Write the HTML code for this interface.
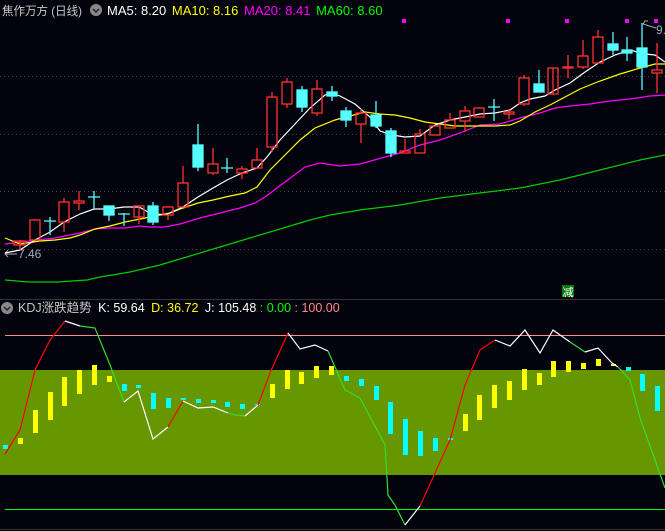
<!DOCTYPE html>
<html><head><meta charset="utf-8"><style>
body{margin:0;background:#03030d;width:665px;height:531px;overflow:hidden;font-family:"Liberation Sans","Noto Sans CJK SC",sans-serif}
</style></head><body>
<svg width="665" height="531" viewBox="0 0 665 531" xmlns="http://www.w3.org/2000/svg" style="display:block">
<rect width="665" height="531" fill="#03030d"/>
<g stroke="#444" stroke-dasharray="1,3" stroke-width="1">
<line x1="0" y1="76.5" x2="665" y2="76.5"/><line x1="0" y1="134.5" x2="665" y2="134.5"/>
<line x1="0" y1="191.5" x2="665" y2="191.5"/><line x1="0" y1="249.5" x2="665" y2="249.5"/>
</g>
<line x1="0" y1="299.5" x2="665" y2="299.5" stroke="#333"/>
<line x1="0" y1="529.5" x2="665" y2="529.5" stroke="#333"/>
<!-- header -->
<text x="2" y="15" font-size="12" fill="#c8c8c8" textLength="80" lengthAdjust="spacingAndGlyphs">焦作万方 (日线)</text>
<circle cx="96" cy="10" r="6" fill="#888"/><path d="M93 9l3 3 3-3" stroke="#222" fill="none" stroke-width="1.5"/>
<text x="107" y="15" font-size="13"><tspan fill="#fff">MA5: 8.20 </tspan><tspan fill="#ff0" dx="2">MA10: 8.16 </tspan><tspan fill="#f0f" dx="2">MA20: 8.41 </tspan><tspan fill="#0f0" dx="2">MA60: 8.60</tspan></text>
<g fill="#f0f"><rect x="402" y="19" width="4" height="4"/><rect x="506" y="19" width="4" height="4"/><rect x="565" y="19" width="4" height="4"/><rect x="625" y="19" width="4" height="4"/><rect x="654" y="19" width="4" height="4"/></g>
<path d="M643 24l2-3h3M643 24l13 4" stroke="#aaa" fill="none"/><text x="656" y="34" font-size="12" fill="#9ab">9.</text>
<path d="M8 250l-3 4 3 3M5 254h12" stroke="#aaa" fill="none"/><text x="18" y="258" font-size="12" fill="#9ab">7.46</text>
<!-- MA lines -->
<polyline fill="none" stroke="#0c0" stroke-width="1.2" points="5,280 28,282 57,282 87,280 100,277 130,272 160,265 190,256 220,247 250,238 280,229 310,220 330,215 360,210 400,205 440,198 480,193 520,188 560,180 600,170 640,160 665,155"/>
<polyline fill="none" stroke="#f0f" stroke-width="1.2" points="5,244 30,241 55,238 80,233 95,229 110,228 125,228 140,226 150,227 165,227 180,224 200,218 220,213 240,208 255,203 265,197 285,182 305,167 320,163 340,166 360,164 385,157 400,153 420,145 440,140 460,133 480,125 500,124 520,118 540,113 555,108 570,106 590,104 610,101 630,99 650,96 665,95"/>
<polyline fill="none" stroke="#ff0" stroke-width="1.2" points="5,238 20,244 40,241 55,240 70,238 80,235 95,229 110,226 125,222 140,219 155,216 170,213 183,208 198,203 213,200 230,196 245,193 257,187 270,170 285,155 300,140 315,128 335,120 350,116 365,112 380,114 395,115 410,118 425,122 440,124 455,126 480,126 495,126 510,125 520,121 535,112 550,105 565,97 580,89 600,81 620,74 640,68 655,64 665,64"/>
<polyline fill="none" stroke="#fff" stroke-width="1.2" points="5,253 20,250 35,240 50,232 64,222 80,214 94,209 109,209 124,207 139,207 150,213 165,215 183,207 198,197 213,188 227,180 242,173 257,168 267,157 280,140 295,124 310,108 325,95 332,93 340,96 355,104 370,117 380,131 392,135 405,137 420,136 435,125 450,120 465,117 480,114 495,113 510,110 520,103 530,99 545,96 555,90 570,83 585,72 600,62 615,55 630,50 645,54 655,55 665,62"/>
<!-- candles -->
<g stroke="#ff3030" fill="none" stroke-width="1.3">
<path d="M20,240V250M35,219V220M64,198V202M64,222V232M79,191V201M79,203V210M139,206V224M168,206V207M168,215V220M183,166V183M213,148V164M213,173V175M242,166V169M242,173V179M257,148V160M272,92V97M272,147V152M287,78V82M287,104V108M317,80V89M317,113V116M361,109V113M361,124V143M405,139V151M420,129V134M450,113V120M465,106V111M465,121V132M479,107V108M509,109V119M524,75V78M524,104V106M553,68V94M568,55V78M583,40V56M583,67V69M598,30V37M657,43V70M657,73V93"/>
<rect x="14" y="241" width="11" height="4"/><rect x="30" y="220" width="10" height="20"/><rect x="59" y="202" width="10" height="20"/><rect x="74" y="201" width="10" height="2"/><rect x="134" y="206" width="10" height="11"/><rect x="163" y="207" width="10" height="8"/><rect x="178" y="183" width="10" height="24"/><rect x="208" y="164" width="10" height="9"/><rect x="237" y="169" width="10" height="4"/><rect x="252" y="160" width="10" height="8"/><rect x="267" y="97" width="10" height="50"/><rect x="282" y="82" width="10" height="22"/><rect x="312" y="89" width="10" height="24"/><rect x="356" y="113" width="10" height="11"/><rect x="400" y="151" width="10" height="2"/><rect x="415" y="134" width="10" height="19"/><rect x="430" y="126" width="10" height="9"/><rect x="445" y="120" width="10" height="8"/><rect x="460" y="111" width="10" height="10"/><rect x="474" y="108" width="10" height="9"/><rect x="504" y="112" width="10" height="2"/><rect x="519" y="78" width="10" height="26"/><rect x="548" y="68" width="10" height="26"/><rect x="563" y="67" width="10" height="1"/><rect x="578" y="56" width="10" height="11"/><rect x="593" y="37" width="10" height="26"/><rect x="652" y="70" width="10" height="3"/>
</g>
<g stroke="#55ffff" fill="#55ffff" stroke-width="1.3">
<path d="M50,217V235M44,221H56M94,191V209M88,197H100M109,215V221M124,213V226M118,214H130M153,202V225M198,124V171M227,158V173M221,168H233M302,86V112M332,86V101M346,107V127M376,101V128M391,128V157M494,99V121M488,107H500M539,70V92M613,32V55M627,37V61M642,23V90" fill="none"/>
<rect x="104" y="206" width="10" height="9"/><rect x="148" y="206" width="10" height="16"/><rect x="193" y="145" width="10" height="22"/><rect x="297" y="90" width="10" height="17"/><rect x="327" y="92" width="10" height="4"/><rect x="341" y="111" width="10" height="9"/><rect x="371" y="115" width="10" height="11"/><rect x="386" y="131" width="10" height="22"/><rect x="534" y="84" width="10" height="8"/><rect x="608" y="44" width="10" height="6"/><rect x="622" y="50" width="10" height="3"/><rect x="637" y="48" width="10" height="19"/>
</g>
<rect x="562" y="285" width="12" height="12" fill="#0a7a0a"/><text x="562.5" y="296" font-size="11" fill="#fff">减</text>
<!-- KDJ header -->
<circle cx="7" cy="308" r="6" fill="#888"/><path d="M4 307l3 3 3-3" stroke="#222" fill="none" stroke-width="1.5"/>
<text x="18" y="312" font-size="12.5"><tspan fill="#c8c8c8">KDJ涨跌趋势 </tspan><tspan fill="#fff" dx="3">K: 59.64 </tspan><tspan fill="#ff0" dx="3">D: 36.72 </tspan><tspan fill="#fff" dx="3">J: 105.48 </tspan><tspan fill="#0f0">: 0.00 </tspan><tspan fill="#f88">: 100.00</tspan></text>
<!-- KDJ panel -->
<rect x="0" y="370" width="665" height="105" fill="#669600"/>
<line x1="5" y1="335.5" x2="665" y2="335.5" stroke="#f88"/>
<line x1="5" y1="509.5" x2="665" y2="509.5" stroke="#0f0"/>
<g fill="#ff0"><rect x="18" y="438" width="5" height="6"/><rect x="33" y="410" width="5" height="23"/><rect x="48" y="392" width="5" height="28"/><rect x="62" y="377" width="5" height="29"/><rect x="77" y="370" width="5" height="24"/><rect x="92" y="365" width="5" height="20"/><rect x="107" y="376" width="5" height="6"/><rect x="270" y="384" width="5" height="14"/><rect x="285" y="370" width="5" height="19"/><rect x="299" y="372" width="5" height="12"/><rect x="314" y="366" width="5" height="12"/><rect x="329" y="366" width="5" height="9"/><rect x="463" y="414" width="5" height="17"/><rect x="477" y="395" width="5" height="25"/><rect x="492" y="385" width="5" height="23"/><rect x="507" y="381" width="5" height="19"/><rect x="522" y="369" width="5" height="21"/><rect x="537" y="373" width="5" height="12"/><rect x="551" y="361" width="5" height="16"/><rect x="566" y="361" width="5" height="11"/><rect x="581" y="363" width="5" height="6"/><rect x="596" y="359" width="5" height="7"/><rect x="611" y="364" width="5" height="2"/></g>
<g fill="#0ff"><rect x="3" y="445" width="5" height="4"/><rect x="122" y="384" width="5" height="7"/><rect x="136" y="385" width="5" height="3"/><rect x="151" y="393" width="5" height="16"/><rect x="166" y="398" width="5" height="10"/><rect x="181" y="398" width="5" height="2"/><rect x="196" y="399" width="5" height="4"/><rect x="211" y="400" width="5" height="3"/><rect x="225" y="402" width="5" height="5"/><rect x="240" y="404" width="5" height="5"/><rect x="255" y="404" width="5" height="1"/><rect x="344" y="376" width="5" height="5"/><rect x="359" y="379" width="5" height="7"/><rect x="374" y="386" width="5" height="14"/><rect x="388" y="402" width="5" height="32"/><rect x="403" y="419" width="5" height="36"/><rect x="418" y="431" width="5" height="25"/><rect x="433" y="438" width="5" height="13"/><rect x="448" y="438" width="5" height="2"/><rect x="626" y="367" width="5" height="4"/><rect x="640" y="374" width="5" height="17"/><rect x="655" y="386" width="5" height="25"/></g>
<g fill="none" stroke-width="1.2">
<polyline stroke="#f00" points="5,454 20,430 35,370 50,340 65,321"/>
<polyline stroke="#fff" points="65,321 80,326"/>
<polyline stroke="#3d3" points="80,326 95,328 110,365 124,402"/>
<polyline stroke="#fff" points="124,402 138,391 153,439 168,427"/>
<polyline stroke="#f00" points="168,427 183,401"/>
<polyline stroke="#fff" points="183,401 198,408 213,407 228,413"/>
<polyline stroke="#3d3" points="228,413 235,415 245,416"/>
<polyline stroke="#fff" points="245,416 258,405"/>
<polyline stroke="#f00" points="258,405 270,373 288,333"/>
<polyline stroke="#fff" points="288,333 300,349 315,345 328,351"/>
<polyline stroke="#3d3" points="328,351 345,390 360,398 375,426 385,445 388,495 395,505 405,525"/>
<polyline stroke="#fff" points="405,525 420,506"/>
<polyline stroke="#f00" points="420,506 450,440 465,385 480,350 495,340"/>
<polyline stroke="#fff" points="495,340 510,346 525,330 540,353 553,330 570,342"/>
<polyline stroke="#3d3" points="570,342 585,352"/>
<polyline stroke="#fff" points="585,352 598,348 612,363 618,367"/>
<polyline stroke="#3d3" points="618,367 630,380 640,418 655,460 665,488"/>
</g>
</svg>
</body></html>
